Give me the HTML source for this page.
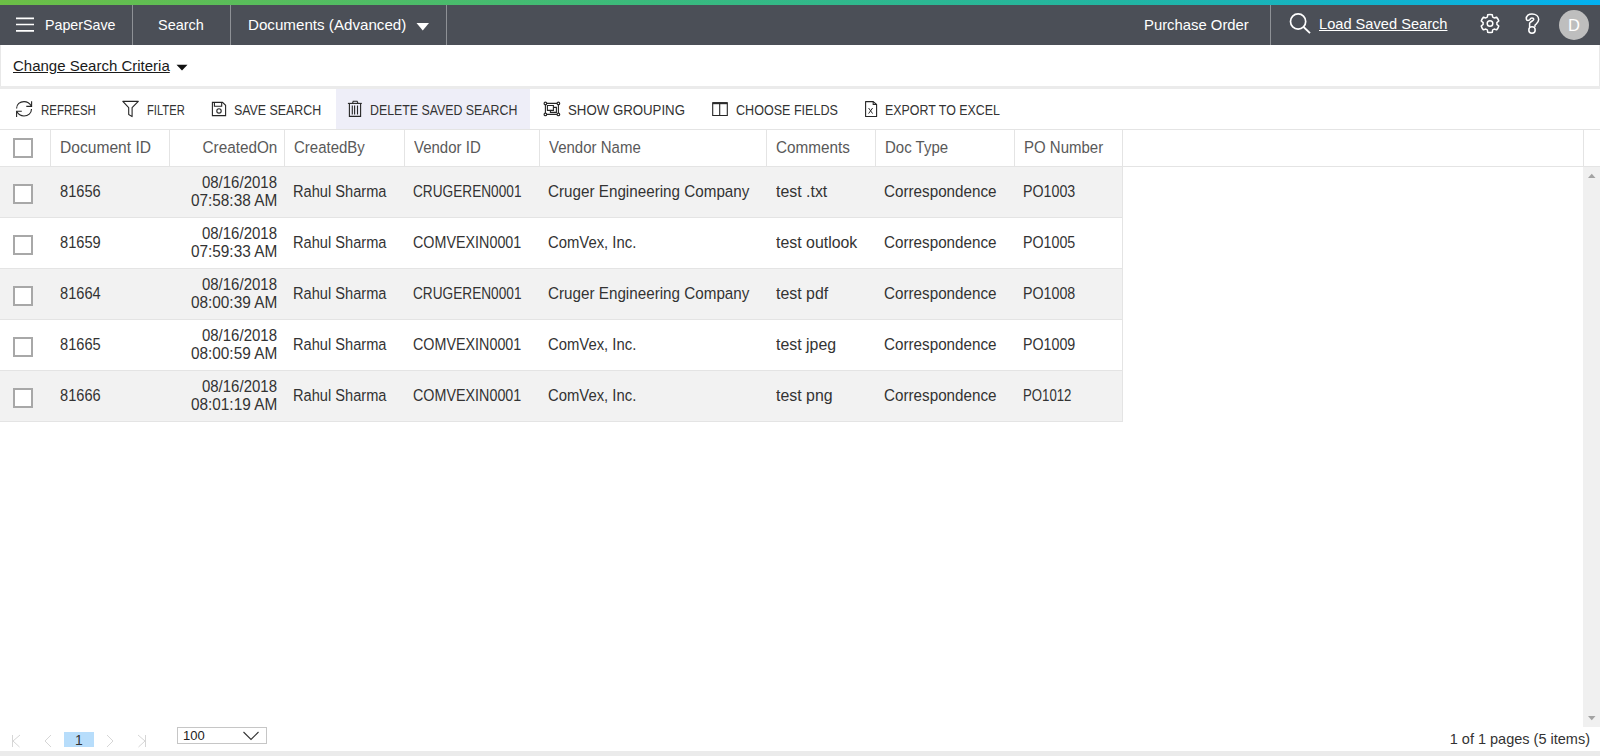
<!DOCTYPE html>
<html><head><meta charset="utf-8"><title>PaperSave - Documents (Advanced)</title>
<style>
*{box-sizing:border-box;margin:0;padding:0}
html,body{width:1600px;height:756px;overflow:hidden;background:#fff;font-family:"Liberation Sans",sans-serif}
.r{position:absolute}
.t{position:absolute;white-space:nowrap;line-height:20px;font-family:"Liberation Sans",sans-serif}
</style></head><body>
<div class="r" style="left:0px;top:0px;width:1600px;height:5px;background:linear-gradient(90deg,#6cbf46 0%,#3bba7c 40%,#22b5a2 70%,#03b0f0 100%);"></div>
<div class="r" style="left:0px;top:5px;width:1600px;height:40px;background:#4b4f57;"></div>
<div class="r" style="left:132px;top:5px;width:1px;height:40px;background:#8e9196;"></div>
<div class="r" style="left:230px;top:5px;width:1px;height:40px;background:#8e9196;"></div>
<div class="r" style="left:446px;top:5px;width:1px;height:40px;background:#8e9196;"></div>
<div class="r" style="left:1270px;top:5px;width:1px;height:40px;background:#8e9196;"></div>
<svg class="r" style="left:14px;top:14px" width="22" height="20" viewBox="0 0 22 20"><path d="M2 4.3H20M2 10.5H20M2 16.8H20" stroke="#fff" stroke-width="1.7"/></svg>
<div class="t" style="left:45px;top:15px;font-size:15px;color:#fff;transform:scale(0.9500,1.0000);transform-origin:left 15px;">PaperSave</div>
<div class="t" style="left:158px;top:15px;font-size:15px;color:#fff;transform:scale(0.9650,1.0000);transform-origin:left 15px;">Search</div>
<div class="t" style="left:248px;top:15px;font-size:15px;color:#fff;transform:scale(1.0100,1.0000);transform-origin:left 15px;">Documents (Advanced)</div>
<svg class="r" style="left:414px;top:20px" width="18" height="14" viewBox="0 0 18 14"><path d="M2.5 3H15L8.75 10.6Z" fill="#fff"/></svg>
<div class="t" style="left:1144px;top:15px;font-size:15px;color:#fff;transform:scale(0.9900,1.0000);transform-origin:left 15px;">Purchase Order</div>
<svg class="r" style="left:1286px;top:10px" width="28" height="26" viewBox="0 0 28 26"><circle cx="12.1" cy="11.5" r="7.6" fill="none" stroke="#fff" stroke-width="1.7"/><path d="M17.6 17L24 23.2" stroke="#fff" stroke-width="1.8"/></svg>
<div class="t" style="left:1319px;top:14px;font-size:15px;color:#fff;transform:scale(0.9750,1.0000);transform-origin:left 15px;text-decoration:underline;">Load Saved Search</div>
<svg class="r" style="left:1478px;top:11px" width="24" height="25" viewBox="0 0 24 25"><path d="M9.31 6.14 L9.75 3.68 A9.1 9.1 0 0 1 14.25 3.68 L14.69 6.14 A6.9 6.9 0 0 1 16.16 7.00 L18.51 6.14 A9.1 9.1 0 0 1 20.76 10.04 L18.85 11.65 A6.9 6.9 0 0 1 18.85 13.35 L20.76 14.96 A9.1 9.1 0 0 1 18.51 18.86 L16.16 18.00 A6.9 6.9 0 0 1 14.69 18.86 L14.25 21.32 A9.1 9.1 0 0 1 9.75 21.32 L9.31 18.86 A6.9 6.9 0 0 1 7.84 18.00 L5.49 18.86 A9.1 9.1 0 0 1 3.24 14.96 L5.15 13.35 A6.9 6.9 0 0 1 5.15 11.65 L3.24 10.04 A9.1 9.1 0 0 1 5.49 6.14 L7.84 7.00 A6.9 6.9 0 0 1 9.31 6.14Z" fill="none" stroke="#fff" stroke-width="1.5" stroke-linejoin="round"/><circle cx="12" cy="12.5" r="2.8" fill="none" stroke="#fff" stroke-width="1.5"/></svg>
<svg class="r" style="left:1522px;top:11px" width="22" height="25" viewBox="0 0 22 25"><path d="M4.3 8.2C4.0 4.6 7.0 2.9 10.0 2.9C13.9 2.9 16.7 5.3 16.7 8.6C16.7 11.3 14.5 12.6 13.0 14.2L12.9 15.9M7.6 15.9L7.6 12.6C7.6 10.6 11.8 10.0 11.8 8.3C11.8 7.4 11.0 6.9 10.0 6.9C9.0 6.9 8.4 7.4 8.0 8.4C7.2 9.8 4.6 10.0 4.3 8.2" fill="none" stroke="#fff" stroke-width="1.5" stroke-linejoin="round"/><circle cx="10" cy="19" r="3.2" fill="none" stroke="#fff" stroke-width="1.5"/></svg>
<div class="r" style="left:1559px;top:10px;width:30px;height:30px;border-radius:50%;background:#bebebe;color:#fff;font-size:16.5px;line-height:30px;text-align:center;font-family:'Liberation Sans',sans-serif">D</div>
<div class="r" style="left:0px;top:45px;width:1px;height:41px;background:#e8e8e8;"></div>
<div class="r" style="left:1599px;top:45px;width:1px;height:41px;background:#e8e8e8;"></div>
<div class="r" style="left:0px;top:86px;width:1600px;height:3px;background:#ebebeb;"></div>
<div class="t" style="left:13px;top:56px;font-size:15px;color:#1a1a1a;text-decoration:underline;">Change Search Criteria</div>
<svg class="r" style="left:174px;top:62px" width="16" height="11" viewBox="0 0 16 11"><path d="M2.5 2.8H13.5L8 8.6Z" fill="#111"/></svg>
<div class="r" style="left:336px;top:89px;width:194px;height:40px;background:#eeeef8;"></div>
<div class="t" style="left:41px;top:100px;font-size:14px;color:#333;transform:scale(0.8200,1.0000);transform-origin:left 15px;">REFRESH</div>
<div class="t" style="left:147px;top:100px;font-size:14px;color:#333;transform:scale(0.8000,1.0000);transform-origin:left 15px;">FILTER</div>
<div class="t" style="left:234px;top:100px;font-size:14px;color:#333;transform:scale(0.8850,1.0000);transform-origin:left 15px;">SAVE SEARCH</div>
<div class="t" style="left:370px;top:100px;font-size:14px;color:#333;transform:scale(0.8820,1.0000);transform-origin:left 15px;">DELETE SAVED SEARCH</div>
<div class="t" style="left:568px;top:100px;font-size:14px;color:#333;transform:scale(0.9460,1.0000);transform-origin:left 15px;">SHOW GROUPING</div>
<div class="t" style="left:736px;top:100px;font-size:14px;color:#333;transform:scale(0.8970,1.0000);transform-origin:left 15px;">CHOOSE FIELDS</div>
<div class="t" style="left:885px;top:100px;font-size:14px;color:#333;transform:scale(0.8870,1.0000);transform-origin:left 15px;">EXPORT TO EXCEL</div>
<svg class="r" style="left:12px;top:98px" width="24" height="22" viewBox="0 0 24 22"><path d="M4.6 10.4C4.6 6.3 7.9 3.6 12 3.6C15.2 3.6 17.8 5.3 19.3 8.1" fill="none" stroke="#262626" stroke-width="1.1"/><path d="M19.6 3.2V8.4H14.3" fill="none" stroke="#262626" stroke-width="1.1"/><path d="M19.5 11C19.5 15.2 16.1 18 12 18C8.8 18 6.2 16.3 4.8 13.6" fill="none" stroke="#262626" stroke-width="1.1"/><path d="M4.6 18.9V13.3H9.8" fill="none" stroke="#262626" stroke-width="1.1"/></svg>
<svg class="r" style="left:118px;top:98px" width="24" height="22" viewBox="0 0 24 22"><path d="M4.8 3.4H20.3L14.1 9.7V18.6L10.7 16.5V9.7Z" fill="none" stroke="#262626" stroke-width="1.1" stroke-linejoin="round"/></svg>
<svg class="r" style="left:206px;top:98px" width="24" height="22" viewBox="0 0 24 22"><path d="M6.4 4.4H16.5L19.6 7.3V17.6H6.4Z" fill="none" stroke="#262626" stroke-width="1.1"/><path d="M8.4 4.4V8.3H15.7V4.4" fill="none" stroke="#262626" stroke-width="1.1"/><circle cx="13" cy="12.9" r="2.2" fill="none" stroke="#262626" stroke-width="1.1"/></svg>
<svg class="r" style="left:342px;top:98px" width="24" height="22" viewBox="0 0 24 22"><path d="M5.9 5.4H19.8" fill="none" stroke="#262626" stroke-width="1.1"/><path d="M10.5 5.4L11.2 3.3H15.1L16 5.4" fill="none" stroke="#262626" stroke-width="1.1"/><path d="M7.4 5.4V18.4H18.6V5.4" fill="none" stroke="#262626" stroke-width="1.1"/><path d="M10.3 7.5V16.5M12.6 7.5V16.5M15.5 7.5V16.5" fill="none" stroke="#262626" stroke-width="1.1"/></svg>
<svg class="r" style="left:539px;top:98px" width="24" height="22" viewBox="0 0 24 22"><path d="M6.4 5.4H19.4V16.4H6.4Z" fill="none" stroke="#262626" stroke-width="1.1"/><path d="M8.4 7.5H14.4V12.4H8.4Z" fill="none" stroke="#262626" stroke-width="1.1"/><path d="M14.4 9.4H17.4V14.4H11.4V12.4" fill="none" stroke="#262626" stroke-width="1.1"/><circle cx="6.4" cy="5.4" r="1.3" fill="#fff" stroke="#2b2b2b" stroke-width="1.2"/><circle cx="19.4" cy="5.4" r="1.3" fill="#fff" stroke="#2b2b2b" stroke-width="1.2"/><circle cx="6.4" cy="16.4" r="1.3" fill="#fff" stroke="#2b2b2b" stroke-width="1.2"/><circle cx="19.4" cy="16.4" r="1.3" fill="#fff" stroke="#2b2b2b" stroke-width="1.2"/></svg>
<svg class="r" style="left:707px;top:98px" width="24" height="22" viewBox="0 0 24 22"><path d="M5.7 4.9H20.3V17.5H5.7Z" fill="none" stroke="#262626" stroke-width="1.1"/><path d="M5.7 5.2H20.3" stroke="#2b2b2b" stroke-width="2"/><path d="M12.7 4.9V17.5" fill="none" stroke="#262626" stroke-width="1.1"/></svg>
<svg class="r" style="left:858px;top:98px" width="24" height="22" viewBox="0 0 24 22"><path d="M7.6 3.6H15.2L18.6 6.5V18.5H7.6Z" fill="none" stroke="#262626" stroke-width="1.1" stroke-linejoin="round"/><path d="M15.2 3.6V6.5H18.6" fill="none" stroke="#262626" stroke-width="1.1"/><path d="M10.6 10L14.6 15.6M14.6 10L10.6 15.6" stroke="#2b2b2b" stroke-width="1"/></svg>
<div class="r" style="left:0px;top:129px;width:1600px;height:1px;background:#e4e4e4;"></div>
<div class="r" style="left:0px;top:166px;width:1600px;height:1px;background:#e4e4e4;"></div>
<div class="r" style="left:50px;top:130px;width:1px;height:36px;background:#e4e4e4;"></div>
<div class="r" style="left:169px;top:130px;width:1px;height:36px;background:#e4e4e4;"></div>
<div class="r" style="left:284px;top:130px;width:1px;height:36px;background:#e4e4e4;"></div>
<div class="r" style="left:404px;top:130px;width:1px;height:36px;background:#e4e4e4;"></div>
<div class="r" style="left:539px;top:130px;width:1px;height:36px;background:#e4e4e4;"></div>
<div class="r" style="left:766px;top:130px;width:1px;height:36px;background:#e4e4e4;"></div>
<div class="r" style="left:875px;top:130px;width:1px;height:36px;background:#e4e4e4;"></div>
<div class="r" style="left:1014px;top:130px;width:1px;height:36px;background:#e4e4e4;"></div>
<div class="r" style="left:1122px;top:130px;width:1px;height:36px;background:#e4e4e4;"></div>
<div class="r" style="left:1583px;top:130px;width:1px;height:36px;background:#e4e4e4;"></div>
<div class="r" style="left:13px;top:138px;width:20px;height:20px;border:2px solid #a8a8a8;background:#fff"></div>
<div class="t" style="left:60px;top:138px;font-size:15px;color:#595959;transform:scale(1.0400,1.0700);transform-origin:left 15px;">Document ID</div>
<div class="t" style="right:1323px;top:138px;font-size:15px;color:#595959;transform:scale(1.0200,1.0700);transform-origin:right 15px;">CreatedOn</div>
<div class="t" style="left:294px;top:138px;font-size:15px;color:#595959;transform:scale(1.0000,1.0700);transform-origin:left 15px;">CreatedBy</div>
<div class="t" style="left:414px;top:138px;font-size:15px;color:#595959;transform:scale(1.0000,1.0700);transform-origin:left 15px;">Vendor ID</div>
<div class="t" style="left:549px;top:138px;font-size:15px;color:#595959;transform:scale(1.0000,1.0700);transform-origin:left 15px;">Vendor Name</div>
<div class="t" style="left:776px;top:138px;font-size:15px;color:#595959;transform:scale(1.0200,1.0700);transform-origin:left 15px;">Comments</div>
<div class="t" style="left:885px;top:138px;font-size:15px;color:#595959;transform:scale(1.0000,1.0700);transform-origin:left 15px;">Doc Type</div>
<div class="t" style="left:1024px;top:138px;font-size:15px;color:#595959;transform:scale(1.0000,1.0700);transform-origin:left 15px;">PO Number</div>
<div class="r" style="left:0px;top:167px;width:1122px;height:50px;background:#f2f2f2;"></div>
<div class="r" style="left:0px;top:217px;width:1123px;height:1px;background:#e4e4e4;"></div>
<div class="r" style="left:13px;top:184px;width:20px;height:20px;border:2px solid #a8a8a8;background:#fff"></div>
<div class="t" style="left:60px;top:182px;font-size:15px;color:#333;transform:scale(0.9760,1.0700);transform-origin:left 15px;">81656</div>
<div class="t" style="right:1323px;top:173px;font-size:15px;color:#333;transform:scale(1.0000,1.0700);transform-origin:right 15px;">08/16/2018</div>
<div class="t" style="right:1323px;top:191px;font-size:15px;color:#333;transform:scale(1.0250,1.0700);transform-origin:right 15px;">07:58:38 AM</div>
<div class="t" style="left:293px;top:182px;font-size:15px;color:#333;transform:scale(0.9750,1.0700);transform-origin:left 15px;">Rahul Sharma</div>
<div class="t" style="left:413px;top:182px;font-size:15px;color:#333;transform:scale(0.9100,1.0700);transform-origin:left 15px;">CRUGEREN0001</div>
<div class="t" style="left:548px;top:182px;font-size:15px;color:#333;transform:scale(1.0150,1.0700);transform-origin:left 15px;">Cruger Engineering Company</div>
<div class="t" style="left:776px;top:182px;font-size:15px;color:#333;transform:scale(1.0600,1.0700);transform-origin:left 15px;">test .txt</div>
<div class="t" style="left:884px;top:182px;font-size:15px;color:#333;transform:scale(1.0150,1.0700);transform-origin:left 15px;">Correspondence</div>
<div class="t" style="left:1023px;top:182px;font-size:15px;color:#333;transform:scale(0.9500,1.0700);transform-origin:left 15px;">PO1003</div>
<div class="r" style="left:0px;top:268px;width:1123px;height:1px;background:#e4e4e4;"></div>
<div class="r" style="left:13px;top:235px;width:20px;height:20px;border:2px solid #a8a8a8;background:#fff"></div>
<div class="t" style="left:60px;top:233px;font-size:15px;color:#333;transform:scale(0.9760,1.0700);transform-origin:left 15px;">81659</div>
<div class="t" style="right:1323px;top:224px;font-size:15px;color:#333;transform:scale(1.0000,1.0700);transform-origin:right 15px;">08/16/2018</div>
<div class="t" style="right:1323px;top:242px;font-size:15px;color:#333;transform:scale(1.0250,1.0700);transform-origin:right 15px;">07:59:33 AM</div>
<div class="t" style="left:293px;top:233px;font-size:15px;color:#333;transform:scale(0.9750,1.0700);transform-origin:left 15px;">Rahul Sharma</div>
<div class="t" style="left:413px;top:233px;font-size:15px;color:#333;transform:scale(0.9550,1.0700);transform-origin:left 15px;">COMVEXIN0001</div>
<div class="t" style="left:548px;top:233px;font-size:15px;color:#333;transform:scale(0.9900,1.0700);transform-origin:left 15px;">ComVex, Inc.</div>
<div class="t" style="left:776px;top:233px;font-size:15px;color:#333;transform:scale(1.0600,1.0700);transform-origin:left 15px;">test outlook</div>
<div class="t" style="left:884px;top:233px;font-size:15px;color:#333;transform:scale(1.0150,1.0700);transform-origin:left 15px;">Correspondence</div>
<div class="t" style="left:1023px;top:233px;font-size:15px;color:#333;transform:scale(0.9500,1.0700);transform-origin:left 15px;">PO1005</div>
<div class="r" style="left:0px;top:269px;width:1122px;height:50px;background:#f2f2f2;"></div>
<div class="r" style="left:0px;top:319px;width:1123px;height:1px;background:#e4e4e4;"></div>
<div class="r" style="left:13px;top:286px;width:20px;height:20px;border:2px solid #a8a8a8;background:#fff"></div>
<div class="t" style="left:60px;top:284px;font-size:15px;color:#333;transform:scale(0.9760,1.0700);transform-origin:left 15px;">81664</div>
<div class="t" style="right:1323px;top:275px;font-size:15px;color:#333;transform:scale(1.0000,1.0700);transform-origin:right 15px;">08/16/2018</div>
<div class="t" style="right:1323px;top:293px;font-size:15px;color:#333;transform:scale(1.0250,1.0700);transform-origin:right 15px;">08:00:39 AM</div>
<div class="t" style="left:293px;top:284px;font-size:15px;color:#333;transform:scale(0.9750,1.0700);transform-origin:left 15px;">Rahul Sharma</div>
<div class="t" style="left:413px;top:284px;font-size:15px;color:#333;transform:scale(0.9100,1.0700);transform-origin:left 15px;">CRUGEREN0001</div>
<div class="t" style="left:548px;top:284px;font-size:15px;color:#333;transform:scale(1.0150,1.0700);transform-origin:left 15px;">Cruger Engineering Company</div>
<div class="t" style="left:776px;top:284px;font-size:15px;color:#333;transform:scale(1.0600,1.0700);transform-origin:left 15px;">test pdf</div>
<div class="t" style="left:884px;top:284px;font-size:15px;color:#333;transform:scale(1.0150,1.0700);transform-origin:left 15px;">Correspondence</div>
<div class="t" style="left:1023px;top:284px;font-size:15px;color:#333;transform:scale(0.9500,1.0700);transform-origin:left 15px;">PO1008</div>
<div class="r" style="left:0px;top:370px;width:1123px;height:1px;background:#e4e4e4;"></div>
<div class="r" style="left:13px;top:337px;width:20px;height:20px;border:2px solid #a8a8a8;background:#fff"></div>
<div class="t" style="left:60px;top:335px;font-size:15px;color:#333;transform:scale(0.9760,1.0700);transform-origin:left 15px;">81665</div>
<div class="t" style="right:1323px;top:326px;font-size:15px;color:#333;transform:scale(1.0000,1.0700);transform-origin:right 15px;">08/16/2018</div>
<div class="t" style="right:1323px;top:344px;font-size:15px;color:#333;transform:scale(1.0250,1.0700);transform-origin:right 15px;">08:00:59 AM</div>
<div class="t" style="left:293px;top:335px;font-size:15px;color:#333;transform:scale(0.9750,1.0700);transform-origin:left 15px;">Rahul Sharma</div>
<div class="t" style="left:413px;top:335px;font-size:15px;color:#333;transform:scale(0.9550,1.0700);transform-origin:left 15px;">COMVEXIN0001</div>
<div class="t" style="left:548px;top:335px;font-size:15px;color:#333;transform:scale(0.9900,1.0700);transform-origin:left 15px;">ComVex, Inc.</div>
<div class="t" style="left:776px;top:335px;font-size:15px;color:#333;transform:scale(1.0600,1.0700);transform-origin:left 15px;">test jpeg</div>
<div class="t" style="left:884px;top:335px;font-size:15px;color:#333;transform:scale(1.0150,1.0700);transform-origin:left 15px;">Correspondence</div>
<div class="t" style="left:1023px;top:335px;font-size:15px;color:#333;transform:scale(0.9500,1.0700);transform-origin:left 15px;">PO1009</div>
<div class="r" style="left:0px;top:371px;width:1122px;height:50px;background:#f2f2f2;"></div>
<div class="r" style="left:0px;top:421px;width:1123px;height:1px;background:#e4e4e4;"></div>
<div class="r" style="left:13px;top:388px;width:20px;height:20px;border:2px solid #a8a8a8;background:#fff"></div>
<div class="t" style="left:60px;top:386px;font-size:15px;color:#333;transform:scale(0.9760,1.0700);transform-origin:left 15px;">81666</div>
<div class="t" style="right:1323px;top:377px;font-size:15px;color:#333;transform:scale(1.0000,1.0700);transform-origin:right 15px;">08/16/2018</div>
<div class="t" style="right:1323px;top:395px;font-size:15px;color:#333;transform:scale(1.0250,1.0700);transform-origin:right 15px;">08:01:19 AM</div>
<div class="t" style="left:293px;top:386px;font-size:15px;color:#333;transform:scale(0.9750,1.0700);transform-origin:left 15px;">Rahul Sharma</div>
<div class="t" style="left:413px;top:386px;font-size:15px;color:#333;transform:scale(0.9550,1.0700);transform-origin:left 15px;">COMVEXIN0001</div>
<div class="t" style="left:548px;top:386px;font-size:15px;color:#333;transform:scale(0.9900,1.0700);transform-origin:left 15px;">ComVex, Inc.</div>
<div class="t" style="left:776px;top:386px;font-size:15px;color:#333;transform:scale(1.0600,1.0700);transform-origin:left 15px;">test png</div>
<div class="t" style="left:884px;top:386px;font-size:15px;color:#333;transform:scale(1.0150,1.0700);transform-origin:left 15px;">Correspondence</div>
<div class="t" style="left:1023px;top:386px;font-size:15px;color:#333;transform:scale(0.8800,1.0700);transform-origin:left 15px;">PO1012</div>
<div class="r" style="left:1122px;top:167px;width:1px;height:255px;background:#e4e4e4;"></div>
<div class="r" style="left:1583px;top:167px;width:17px;height:560px;background:#f0f0f0;"></div>
<svg class="r" style="left:1584px;top:170px" width="16" height="12" viewBox="0 0 16 12"><path d="M4 8H11.5L7.75 3.8Z" fill="#a3a3a3"/></svg>
<svg class="r" style="left:1584px;top:712px" width="16" height="12" viewBox="0 0 16 12"><path d="M4 4H11.5L7.75 8.2Z" fill="#a3a3a3"/></svg>
<svg class="r" style="left:8px;top:732px" width="16" height="18" viewBox="0 0 16 18"><path d="M4.5 3V15M12 3L5 9L11.5 15" fill="none" stroke="#d6d6d6" stroke-width="1"/></svg>
<svg class="r" style="left:40px;top:732px" width="16" height="18" viewBox="0 0 16 18"><path d="M11 3L5 9L11 15" fill="none" stroke="#d6d6d6" stroke-width="1"/></svg>
<div class="r" style="left:64px;top:732px;width:30px;height:15px;background:#b7ddfb;"></div>
<div class="t" style="left:75px;top:730px;font-size:14px;color:#333;">1</div>
<svg class="r" style="left:102px;top:732px" width="16" height="18" viewBox="0 0 16 18"><path d="M5 3L11 9L5 15" fill="none" stroke="#d6d6d6" stroke-width="1"/></svg>
<svg class="r" style="left:134px;top:732px" width="16" height="18" viewBox="0 0 16 18"><path d="M11.5 3V15M4 3L11 9L4.5 15" fill="none" stroke="#d6d6d6" stroke-width="1"/></svg>
<div class="r" style="left:177px;top:727px;width:90px;height:17px;border:1px solid #c6c6c6;background:#fff"></div>
<div class="t" style="left:183px;top:726px;font-size:13px;color:#222;">100</div>
<svg class="r" style="left:240px;top:728px" width="22" height="14" viewBox="0 0 22 14"><path d="M3.5 4L11 11.5L18.5 4" fill="none" stroke="#333" stroke-width="1.1"/></svg>
<div class="t" style="right:10px;top:729px;font-size:14.5px;color:#333;">1 of 1 pages (5 items)</div>
<div class="r" style="left:0px;top:751px;width:1600px;height:5px;background:#ebebeb;"></div>
</body></html>
